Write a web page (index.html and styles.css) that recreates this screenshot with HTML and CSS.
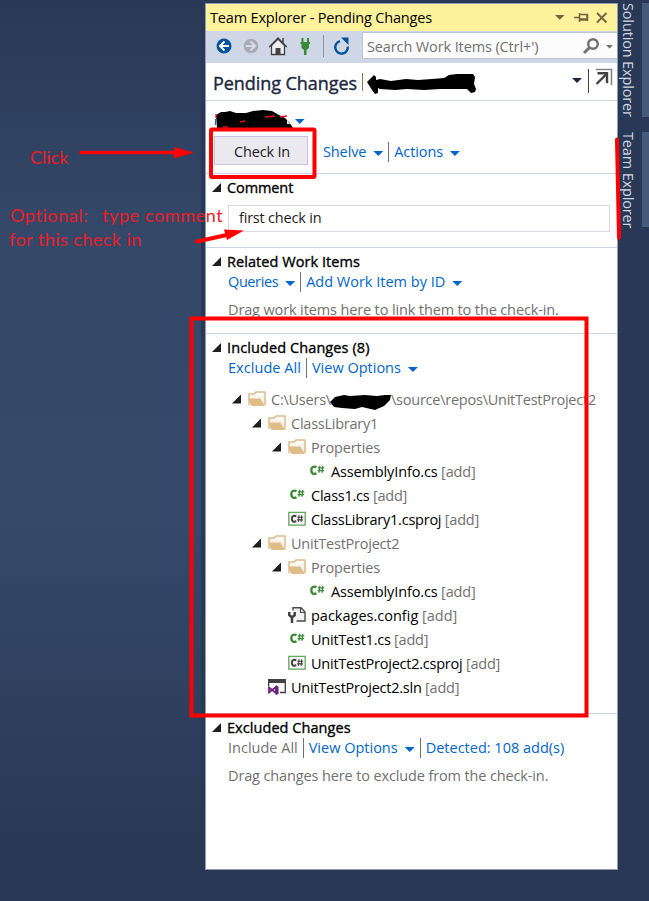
FILE: index.html
```html
<!DOCTYPE html>
<html lang="en">
<head>
<meta charset="utf-8">
<title>Team Explorer - Pending Changes</title>
<link rel="stylesheet" href="styles.css">
</head>
<body>
<svg class="defs" width="0" height="0" aria-hidden="true">
  <symbol id="folder" viewBox="0 0 18 16"><path d="M1 14V3h5l2-2h9v13" fill="#f7f3ee" stroke="#dfbd89" stroke-width="1.500"/><path d="M8 2.500h8v2H8z" fill="#fff"/><path d="M0 7.500h12.500L17 15H3.500z" fill="#dfbd89"/></symbol>
  <symbol id="cs" viewBox="0 0 18 16"><path d="M8.500 4.200C5.500 2.800 3.300 4.300 3.300 7.300s2.200 4.400 5.200 3" fill="none" stroke="#388a34" stroke-width="2.400"/><path d="M11.700 2.700l-.7 7M14.700 2.700l-.7 7M9.800 4.800h6.500M9.500 7.700H16" stroke="#388a34" stroke-width="1.300"/></symbol>
  <symbol id="proj" viewBox="0 0 18 16"><path d="M.8 1.300h16.400v12.900H.8z" fill="#f6f6f6" stroke="#61a85e" stroke-width="1.300"/><path d="M8.300 5.300C5.500 4 3.800 5.300 3.800 7.700s1.700 3.800 4.500 2.500" fill="none" stroke="#424242" stroke-width="1.900"/><path d="M11 4.300l-.5 6.500M13.700 4.300l-.5 6.500M9.200 6.300h6M9 8.900h6" stroke="#424242" stroke-width="1.100"/></symbol>
  <symbol id="config" viewBox="0 0 18 16"><path d="M5 3.500V.8h8L17 5v9H8.500" fill="#f3f3f3" stroke="#4a4a4a" stroke-width="1.400"/><path d="M12.500 1v4.500H17" fill="none" stroke="#4a4a4a" stroke-width="1.200"/><path d="M1.300 5v3.200L4 10.300l2.700-2.100V5M4 9v7" fill="none" stroke="#424242" stroke-width="2.500"/></symbol>
  <symbol id="sln" viewBox="0 0 18 16"><path d="M.7.500h16.600v13H12" fill="#f6f6f6" stroke="#424242" stroke-width="1.300"/><path d="M0 0h18v4H0z" fill="#424242"/><path d="M0 4h1.300v3H0z" fill="#424242"/><path d="M1 8.500l7 5.500V8L1 13.500z" fill="#fff" stroke="#68217a" stroke-width="1.700"/><path d="M7.500 6.500l3 1v7.500l-3 1z" fill="#68217a"/></symbol>
</svg>
<div class="app">
  <main class="panel">
    <header class="titlebar">
      <span class="title">Team Explorer - Pending Changes</span>
      <svg class="window-icons" width="62" height="16" viewBox="0 0 62 16"><path d="M0 5h9.500L4.700 9.700z" fill="#75633d"/><path d="M19 7.500h5M24.500 3v9M25 4.500h7v5.500h-7M25 9h7M32.500 4v7" fill="none" stroke="#75633d" stroke-width="1.500"/><path d="M42 3l9.500 9.500M51.500 3L42 12.500" stroke="#75633d" stroke-width="1.900"/></svg>
    </header>
    <div class="toolbar">
      <svg class="tools" width="156" height="31" viewBox="0 0 156 31">
        <circle cx="18" cy="15" r="7.500" fill="#00539c"/><path d="M23 15h-8M18.500 10.500L14 15l4.500 4.500" fill="none" stroke="#fff" stroke-width="2"/>
        <circle cx="45" cy="15" r="7.300" fill="#a7abb5"/><path d="M40 15h8M44.500 10.500L49 15l-4.500 4.500" fill="none" stroke="#d7dce8" stroke-width="2"/>
        <path d="M65.500 14.500v9h13v-9L72 8z" fill="#eceef3" stroke="#424242" stroke-width="1.300"/><path d="M63.300 16L72 7l8.700 9M77 7v5" fill="none" stroke="#424242" stroke-width="1.500"/><path d="M69.500 17h5v6.500h-5z" fill="#424242"/>
        <path d="M95.500 7h2v4h3.500V7h2v4h1v2h-1v4l-2.500 2v5H98v-5l-2.500-2v-4h-1v-2h1z" fill="#388a34"/>
        <path d="M117.500 4v22" stroke="#8b92a1"/>
        <path d="M134 10.200a6.300 6.300 0 1 0 7.800 5.500" fill="none" stroke="#00539c" stroke-width="2.400"/><path d="M135 6.500h7.500V14z" fill="#00539c"/>
      </svg>
      <div class="search"><span class="search-text">Search Work Items (Ctrl+')</span>
        <svg width="36" height="20" viewBox="0 0 36 20"><circle cx="12" cy="7" r="4.800" fill="none" stroke="#717171" stroke-width="2.400"/><path d="M9 10l-6 6" stroke="#717171" stroke-width="3"/><path d="M25 8h7l-3.500 3.500z" fill="#717171"/></svg>
      </div>
    </div>
    <div class="page-head">
      <h1>Pending Changes</h1><i class="bar"></i>
      <svg class="head-icons" width="50" height="30" viewBox="0 0 50 30"><path d="M3 11h10l-5 5z" fill="#1b293e"/><path d="M19.500 2v24" stroke="#424242"/><path d="M27 2.500h15.500v15.500" fill="none" stroke="#858585" stroke-width="1.600"/><path d="M28.500 6.200h9.500v10M37.500 7L27.500 17" fill="none" stroke="#424242" stroke-width="2.400"/></svg>
    </div>
    <section class="actions">
      <button class="checkin">Check In</button>
      <div class="links"><a class="l-shelve">Shelve</a><i class="caret"></i><i class="sep"></i><a class="l-actions">Actions</a><i class="caret"></i></div>
    </section>
    <section class="comment">
      <h2><i class="tri"></i><span class="h-comment">Comment</span></h2>
      <div class="field"><span>first check in</span></div>
    </section>
    <section class="related">
      <h2><i class="tri"></i><span class="h-related">Related Work Items</span></h2>
      <div class="links"><a class="l-queries">Queries</a><i class="caret"></i><i class="sep"></i><a class="l-add">Add Work Item by ID</a><i class="caret"></i></div>
      <p class="p-link">Drag work items here to link them to the check-in.</p>
    </section>
    <section class="included">
      <h2><i class="tri"></i><span class="h-included">Included Changes (8)</span></h2>
      <div class="links"><a class="l-exclude">Exclude All</a><i class="sep"></i><a class="l-view">View Options</a><i class="caret"></i></div>
      <ul class="tree">
        <li class="d0 dir"><i class="tri"></i><svg><use href="#folder"/></svg><span class="drive">C:\Users\</span><span class="repo">\source\repos\UnitTestProject2</span></li>
        <li class="d1 dir"><i class="tri"></i><svg><use href="#folder"/></svg><span>ClassLibrary1</span></li>
        <li class="d2 dir"><i class="tri"></i><svg><use href="#folder"/></svg><span class="props">Properties</span></li>
        <li class="d3"><svg><use href="#cs"/></svg><span class="asm">AssemblyInfo.cs <em>[add]</em></span></li>
        <li class="d2"><svg><use href="#cs"/></svg><span>Class1.cs <em>[add]</em></span></li>
        <li class="d2"><svg><use href="#proj"/></svg><span>ClassLibrary1.csproj <em>[add]</em></span></li>
        <li class="d1 dir"><i class="tri"></i><svg><use href="#folder"/></svg><span>UnitTestProject2</span></li>
        <li class="d2 dir"><i class="tri"></i><svg><use href="#folder"/></svg><span class="props">Properties</span></li>
        <li class="d3"><svg><use href="#cs"/></svg><span class="asm">AssemblyInfo.cs <em>[add]</em></span></li>
        <li class="d2"><svg><use href="#config"/></svg><span class="pkg">packages.config <em>[add]</em></span></li>
        <li class="d2"><svg><use href="#cs"/></svg><span>UnitTest1.cs <em>[add]</em></span></li>
        <li class="d2"><svg><use href="#proj"/></svg><span>UnitTestProject2.csproj <em>[add]</em></span></li>
        <li class="d1"><svg><use href="#sln"/></svg><span>UnitTestProject2.sln <em>[add]</em></span></li>
      </ul>
    </section>
    <section class="excluded">
      <h2><i class="tri"></i><span class="h-excluded">Excluded Changes</span></h2>
      <div class="links"><a class="l-include off">Include All</a><i class="sep"></i><a class="l-view">View Options</a><i class="caret"></i><i class="sep"></i><a class="l-detected">Detected: 108 add(s)</a></div>
      <p class="p-exclude">Drag changes here to exclude from the check-in.</p>
    </section>
  </main>
  <aside class="rail">
    <div class="tab tab-solution"><span>Solution Explorer</span></div>
    <div class="tab tab-team"><span>Team Explorer</span></div>
  </aside>
</div>
<div class="notes">
  <svg width="649" height="901" viewBox="0 0 649 901">
    <path d="M367 82l7-7 2 2v3l4-1 11 2 15-2 12 1 14-1 12-1 5-3 8-1h16l2 3-1 7 2 5-1 3-4 1-4-4h-27l-16 1-17-1-12 1-15-1-2-1v5l-3 1-3-4z" fill="#000"/>
    <path d="M216 115l5-3h4l5-1 6 2h10l7-2 10-1 9 1 7 4 6 3 4 4 4 6-1 1-13-1-14 2-20-2-16 2-12-2z" fill="#000"/><path d="M216 114v4M223 127h5M240 122l5-1M265 117l10-1M280 117l7-1" stroke="#e81123" stroke-width="1.300" fill="none"/><path d="M287 119v5h3z" fill="#d8e5f5"/><path d="M215.500 119v6" stroke="#06c"/><path d="M295 119h9.500l-4.700 5z" fill="#06c"/>
    <path d="M330 402l5-5 9-2 6 1 15-1 12 1 8-1h6l-1 5-6 6-9 4-13-3-7 2-13-1-8-1z" fill="#000"/>
    <g fill="none" stroke="#f00"><rect x="211" y="129.500" width="103.500" height="47.500" rx="1" stroke-width="4"/><rect x="191.500" y="318.500" width="395" height="397" stroke-width="4"/><path d="M81 152.500h96" stroke-width="3.500" stroke-linecap="round"/><path d="M197 241.500l32-7" stroke-width="4" stroke-linecap="round"/><path d="M617 139.500l2 98" stroke-width="4" stroke-linecap="round"/></g>
    <path d="M174 147l20 5.500-20 6zM224 229.500l20 1-17 9.500z" fill="#f00"/>
  </svg>
  <span class="n-click">Click</span>
  <span class="n-opt">Optional:</span><span class="n-type">type comment</span>
  <span class="n-for">for this check in</span>
</div>
</body>
</html>
```
FILE: styles.css
```css
* { box-sizing: border-box; }
body { margin: 0; width: 649px; height: 901px; overflow: hidden; position: relative; background: #293955; font: 14.5px/20px "Open Sans", "Noto Sans", sans-serif; color: #000; }
.defs { position: absolute; }
.app { height: 901px; display: flex; padding: 3px 0 31px 205px; background: linear-gradient(#293955 0, #34486a 230px, #36496b 520px, #293955 840px) no-repeat 0 0 / 201px 100%, #293955; }
.panel { width: 413px; height: 867px; flex: none; background: #fff; border: 1px solid #8e9bbc; overflow: hidden; white-space: nowrap; }
.titlebar { height: 27px; background: #fff29d; display: flex; align-items: center; justify-content: space-between; padding-left: 4px; }
.title { letter-spacing: -.17px; }
.toolbar { height: 32px; background: #cfd6e5; display: flex; }
.tools { flex: none; }
.search { flex: 1; height: 27px; margin-top: 1px; border: 1px solid #bcc4d8; border-right: 0; background: #fcfcfc; display: flex; align-items: center; justify-content: space-between; padding: 2px 0 0 4px; color: #717171; }
.search-text { letter-spacing: -.12px; }
.page-head { height: 38px; border-bottom: 1px solid #ccd5e5; display: flex; align-items: center; padding-left: 7px; }
h1 { margin: 0; padding-top: 2px; font-size: 18px; font-weight: 400; -webkit-text-stroke: .4px #1b293e; letter-spacing: -.06px; color: #1b293e; }
.bar { width: 1px; height: 18px; background: #927657; margin-left: 5px; }
.head-icons { margin-left: auto; margin-right: -2px; }
section { border-bottom: 1px solid #ccd5e5; }
.actions { height: 73px; padding: 35px 0 0 8px; display: flex; align-items: flex-start; }
.checkin { width: 94px; height: 29px; padding: 3px 0 0 2px; border: 1px solid #c5c6dd; background: #ebe9f0; font: inherit; letter-spacing: -.2px; color: #1e1e1e; }
.links { display: flex; height: 20px; align-items: center; padding-left: 22px; color: #06c; }
.actions .links { padding-left: 15px; margin-top: 6px; }
.links a { flex: none; }
.l-shelve, .l-actions { letter-spacing: -.12px; }
.l-queries { letter-spacing: -.4px; }
.l-exclude { letter-spacing: .05px; }
.caret { width: 10px; height: 5px; margin: 3px 0 0 7px; background: #06c; clip-path: polygon(0 0, 100% 0, 50% 100%); }
.sep { width: 1px; height: 20px; margin: 0 5px; background: #717171; }
.off { color: #717171; }
h2 { margin: 0; height: 20px; font-size: 14.5px; line-height: 20px; font-weight: 400; -webkit-text-stroke: .35px #000; display: flex; padding-left: 6px; }
.h-comment { letter-spacing: -.1px; }
.h-related, .h-excluded { letter-spacing: .06px; }
.h-included { letter-spacing: .1px; }
.tri { width: 9px; height: 9px; background: #1e1e1e; clip-path: polygon(100% 0, 100% 100%, 0 100%); }
h2 .tri { margin: 5px 6px 0 0; }
.comment { height: 74px; padding-top: 4px; }
.field { height: 27px; width: 382px; margin: 7px 0 0 22px; border: 1px solid #d6d8e8; padding: 2px 0 0 10px; color: #1e1e1e; letter-spacing: -.2px; }
.related { height: 86px; padding-top: 4px; }
p { margin: 8px 0 0 22px; color: #717171; letter-spacing: -.13px; }
.included { height: 380px; padding-top: 4px; }
.excluded { border: 0; padding-top: 4px; }
.tree { list-style: none; margin: 10px 0 0; padding: 0; letter-spacing: -.24px; }
.tree li { height: 24px; display: flex; align-items: center; }
.tree svg { width: 18px; height: 16px; margin: -2px 5px 0 0; flex: none; }
.tree .tri { margin: -2px 7px 0 0; }
.d0 { padding-left: 26px; } .d1 { padding-left: 62px; } .d2 { padding-left: 82px; } .d3 { padding-left: 102px; }
.d1.dir { padding-left: 46px; } .d2.dir { padding-left: 66px; }
.dir { color: #717171; }
.drive { width: 120px; }
.asm { letter-spacing: -.14px; }
.pkg { letter-spacing: 0; }
.props { letter-spacing: -.12px; }
em { font-style: normal; color: #717171; }
.rail { width: 31px; color: #d0d6e2; }
.tab { width: 31px; padding-right: 4px; border-right: 7px solid #465a7d; writing-mode: vertical-rl; white-space: nowrap; letter-spacing: -.15px; }
.tab-solution { height: 114px; }
.tab-team { height: 95px; margin-top: 15px; }
.notes { position: absolute; inset: 0; color: #ed1c24; font: 18px/24px Lato, sans-serif; }
.notes svg { position: absolute; left: 0; top: 0; }
.notes span { position: absolute; white-space: nowrap; }
.n-click { left: 30px; top: 145px; }
.n-opt { left: 10px; top: 203px; letter-spacing: .6px; }
.n-type { left: 102px; top: 203px; letter-spacing: .6px; }
.n-for { left: 9px; top: 227px; letter-spacing: .45px; }
```
